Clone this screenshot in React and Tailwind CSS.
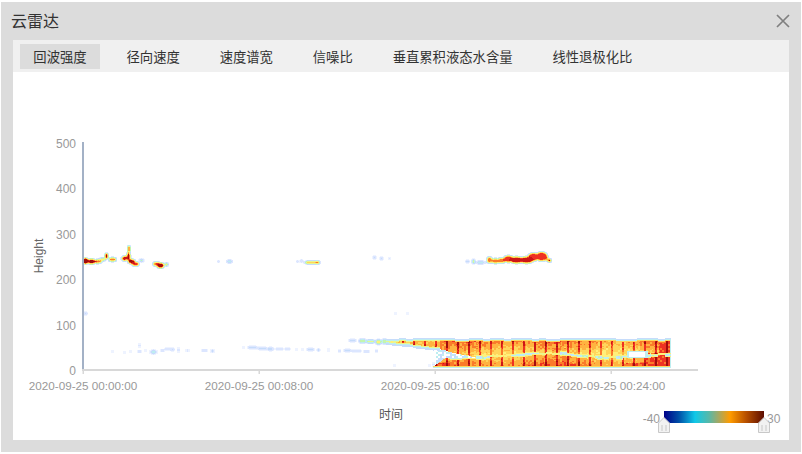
import React from 'react';

const tabs = ['回波强度', '径向速度', '速度谱宽', '信噪比', '垂直累积液态水含量', '线性退极化比'];
const yTicks = [[500, 143], [400, 188.5], [300, 234], [200, 279.5], [100, 325], [0, 370]];
const xTicks = [[83, '2020-09-25 00:00:00'], [259, '2020-09-25 00:08:00'], [435, '2020-09-25 00:16:00'], [611, '2020-09-25 00:24:00']];

// [x, y, rx, ry, peak]
const blobs = [
  [85, 260.5, 3, 3, 1.15], [91, 261, 5, 2.4, 0.95], [97, 261, 4, 2, 0.78], [102, 259, 3, 1.6, 0.5], [106, 255.5, 1.5, 3, 1.05],
  [112, 259, 3.5, 2, 0.78], [128.5, 248.5, 1.5, 3, 1], [124, 258, 3, 2.5, 0.88], [128, 256, 2, 4, 0.95],
  [131, 261, 3.5, 2.4, 0.95], [135, 263.5, 3.5, 2, 0.86], [141, 260, 2.5, 1.6, 0.3], [156, 263.5, 3.5, 2, 0.8],
  [160, 265, 3.5, 2.5, 0.98], [166, 264, 1.8, 1.4, 0.5],
  [467, 261, 2.5, 1.4, 0.2], [473, 261, 1.2, 2.5, 0.4], [480, 262, 6, 1.3, 0.25], [489, 259.5, 2.5, 3, 0.78],
  [495, 260.5, 4, 2.5, 0.76], [501, 260, 4, 2.5, 0.8], [508, 258.5, 5, 3.5, 0.86], [516, 259.5, 7, 3.5, 0.92],
  [526, 259.5, 7, 3.5, 0.92], [533, 256.5, 6, 4, 0.86], [541, 256, 6, 4.5, 0.86], [546, 258, 2, 2.5, 0.6], [549, 260, 1.5, 1.6, 0.95],
  [218, 261, 1.3, 1.3, 0.16], [229, 261, 3.5, 1.4, 0.24], [297, 261, 1.3, 1.3, 0.16], [301, 260.5, 1.3, 1.6, 0.16],
  [311, 262, 7, 1.8, 0.58], [317, 262, 2, 1.3, 0.78], [374, 257, 1.3, 1.8, 0.2], [381, 258, 1.3, 1.8, 0.18], [389, 258, 1, 1, 0.14],
  [395, 313, 0.5, 0.5, 0.3], [407, 313, 0.5, 0.5, 0.3], [656, 183, 0.7, 0.7, 0.25], [85, 313, 2.5, 1.3, 0.18],
  [112, 351, 0.6, 0.6, 0.4], [124, 352, 0.6, 0.6, 0.4], [130, 351, 0.6, 0.6, 0.4], [139, 351, 1, 0.6, 0.4], [139, 345, 0.7, 1, 0.3],
  [145, 350, 0.6, 0.6, 0.4], [153, 351.5, 3.5, 1.6, 0.28], [162, 350, 2, 1, 0.2], [167, 348.5, 2.5, 1.4, 0.18], [172, 349, 2.5, 1.4, 0.18],
  [178, 349.5, 0.7, 1.5, 0.3], [187, 350, 1.5, 0.7, 0.3], [204, 350, 3.5, 1, 0.22], [212, 350.5, 1.5, 0.7, 0.3],
  [243, 347, 0.6, 0.6, 0.4], [252, 347, 5, 1.4, 0.2], [262, 348, 5, 1.4, 0.2], [270, 348.5, 4, 1.6, 0.18], [279, 348.5, 4, 1.4, 0.18],
  [287, 348.5, 3, 1, 0.2], [296, 349, 0.6, 0.6, 0.4], [302, 349, 0.6, 0.6, 0.4], [310, 349, 4, 1.2, 0.2], [318, 349.5, 2.5, 0.8, 0.24],
  [328, 349.5, 0.7, 1, 0.3], [339, 350.5, 0.6, 0.6, 0.4], [347, 350, 4, 1.3, 0.2], [356, 350.5, 5, 1.2, 0.2], [366, 351, 3, 1, 0.22], [376, 350.5, 0.6, 0.6, 0.4],
  [352, 340, 4, 1.4, 0.2], [362, 340.5, 4, 1.8, 0.36], [370, 341, 4, 1.8, 0.42], [378, 341.5, 3, 2.5, 0.48], [384, 341, 3, 2.5, 0.36],
  [394, 365, 0.7, 0.7, 0.3], [429, 365, 0.8, 0.8, 0.3], [433, 364, 0.8, 1, 0.3],
];

function rand(a, b) {
  const s = Math.sin(a * 12.9898 + b * 78.233) * 43758.5453;
  return s - Math.floor(s);
}

function colorOf(v) {
  if (v < 0.07) return '#eef3ff';
  if (v < 0.14) return '#dce6ff';
  if (v < 0.22) return '#c6dcfb';
  if (v < 0.3) return '#bdeef0';
  if (v < 0.38) return '#c4f5b0';
  if (v < 0.46) return '#e8f790';
  if (v < 0.56) return '#fff07a';
  if (v < 0.64) return '#ffd65c';
  if (v < 0.72) return '#ffb340';
  if (v < 0.8) return '#fa7a2c';
  if (v < 0.88) return '#ee3322';
  if (v < 0.95) return '#cc1616';
  return '#a00c10';
}

function bandValue(x, y) {
  if (x < 386 || x > 670) return 0;
  const cx = Math.floor(x / 2);
  const cy = Math.floor(y / 2);
  const seg = Math.floor(x / 7);
  const n = (rand(cx, cy) - 0.5) * 0.1;
  const stripe = ((x - 435 + 1100) % 11) < 2 ? 0.2 : 0;
  const wave = Math.sin(x / 17) * 0.04;
  const top = 339 + (rand(seg, 11) < 0.3 ? 1 : 0);
  const bottom = 367;
  if (y < top - 1 || y > bottom) return 0;
  if (y < top) return 0.18;

  const wedgeBot = 342.5 + (x - 386) * 0.12 + (rand(seg, 2) - 0.5);

  // narrow wedge on the left
  if (x < 440) {
    if (y <= wedgeBot) {
      const d = Math.min(y - top, wedgeBot - y);
      if (d < 1) return 0.26;
      if (d < 2) return 0.44 + stripe * 0.3;
      return 0.66 + stripe + n;
    }
    if (y < wedgeBot + 1.5) return 0.18;
    if (x < 433) return 0;
  }

  const gapY = 355 + Math.sin(x / 23) * 2 + (rand(seg, 3) - 0.5) * 1.5;
  const gapH = rand(seg, 9) > 0.45 ? 0.5 + rand(seg, 5) * 1 : 0;
  const g = Math.abs(y - gapY);

  // start of the lower layer, pale space above it
  if (x < 480) {
    const upperBot = wedgeBot + (x > 440 ? (x - 440) * 0.12 : 0);
    const lowerTop = x < 445 ? 366 - (x - 433) * 0.7 : 358;
    if (y > upperBot && y < lowerTop) {
      if (x < 436) return 0;
      return rand(cx, cy) > 0.65 ? 0 : 0.14 + rand(cx, cy + 1) * 0.14;
    }
  }

  // white hole on the right
  if (x > 626 && x < 648 && y > 350 && y < 358) {
    if (y > 351.5 && y < 356.5 && x > 628 && x < 645) return 0;
    return 0.22;
  }
  if (g < gapH) return 0.2 + rand(cx, cy) * 0.12;
  if (g < gapH + 1) return 0.48 + n;

  const d = Math.min(y - top, bottom - y);
  let v;
  if (y < gapY) {
    v = 0.75 - (y - 341) * 0.012;
    if (x > 560 && x < 640) v -= 0.03;
  } else {
    v = 0.63 + (y - gapY) * 0.012;
    if (y > 362 && (x < 450 || x > 625)) v = 0.8;
  }
  if (x > 645 && y > 352) v = 0.78;
  if (x > 658 && y > 342) v = 0.78;
  v += stripe + n + wave;
  if (d < 1) v = 0.24;
  else if (d < 2) v = Math.min(v, 0.56);
  if (670 - x < 1) v = 0.26;
  return v;
}

function buildCells() {
  const raw = new Map();
  blobs.forEach(([cx, cy, rx, ry, peak]) => {
    for (let x = Math.floor(cx - rx); x <= cx + rx; x++) {
      for (let y = Math.floor(cy - ry); y <= cy + ry; y++) {
        const d = ((x - cx) / rx) ** 2 + ((y - cy) / ry) ** 2;
        if (d > 1) continue;
        const key = x + ',' + y;
        raw.set(key, Math.max(raw.get(key) || 0, peak));
      }
    }
  });

  // 3x3 smoothing, so the echoes fade red > yellow > green > pale at the rim
  const cells = new Map();
  raw.forEach((_, k) => {
    const [x, y] = k.split(',').map(Number);
    for (let i = -1; i <= 1; i++) {
      for (let j = -1; j <= 1; j++) {
        const key = x + i + ',' + (y + j);
        if (cells.has(key)) continue;
        let sum = 0;
        for (let a = -1; a <= 1; a++) {
          for (let b = -1; b <= 1; b++) {
            sum += raw.get(x + i + a + ',' + (y + j + b)) || 0;
          }
        }
        if (sum / 9 > 0.03) cells.set(key, sum / 9);
      }
    }
  });

  for (let x = 386; x <= 670; x++) {
    for (let y = 337; y <= 368; y++) {
      const v = bandValue(x, y);
      if (v > 0) cells.set(x + ',' + y, v);
    }
  }
  return Array.from(cells, ([k, v]) => {
    const [x, y] = k.split(',').map(Number);
    return { x, y, fill: colorOf(v) };
  });
}

const cells = buildCells();

const Handle = ({ x }) => (
  <path
    d={`M${x} 417.5 L${x + 5.5} 423 V432.5 H${x - 5.5} V423 Z M${x - 2} 425 V431 M${x + 2} 425 V431`}
    fill="#f2f2f2"
    stroke="#c8c8c8"
    strokeWidth="1"
  />
);

const App = () => {
  return (
    <div className="w-[802px] h-[454px] bg-white pt-[2px] pl-[1px] overflow-hidden font-['Noto_Sans_CJK_SC','Microsoft_YaHei',sans-serif]">
      <div className="w-[800px] h-[450px] bg-[#dcdcdc] px-3 pb-3 flex flex-col">
        {/* Header */}
        <div className="h-[38px] -mx-1 pl-[3px] pr-[3px] pb-[2px] flex items-center justify-between">
          <span className="text-base leading-none text-[#333] -ml-[1px]">云雷达</span>
          <svg width="14" height="14" viewBox="0 0 14 14" className="mt-[2px]">
            <path d="M1 1 L13 13 M13 1 L1 13" stroke="#808080" strokeWidth="1.7" fill="none" />
          </svg>
        </div>

        <div className="flex-1 bg-white flex flex-col min-h-0">
          {/* Tabs */}
          <div className="h-8 bg-[#f0f0f0] pl-[7px] pt-1 flex items-start gap-[13.2px] text-[13.33px] text-[#333]">
            {tabs.map((t, i) => (
              <div
                key={t}
                className={i === 0 ? 'h-[25px] px-[13.33px] flex items-center bg-[#dcdcdc]' : 'h-[25px] px-[13.33px] flex items-center'}
              >
                {t}
              </div>
            ))}
          </div>

          {/* Chart */}
          <svg width="776" height="368" viewBox="13 72 776 368" className="block">
            <defs>
              <linearGradient id="scale" x1="0" x2="1" y1="0" y2="0">
                <stop offset="0" stopColor="#000088" />
                <stop offset="0.15" stopColor="#0050a8" />
                <stop offset="0.31" stopColor="#10c8e8" />
                <stop offset="0.45" stopColor="#58b8a8" />
                <stop offset="0.55" stopColor="#a8a860" />
                <stop offset="0.66" stopColor="#ff9c00" />
                <stop offset="0.82" stopColor="#b85000" />
                <stop offset="1" stopColor="#5c0c00" />
              </linearGradient>
              <filter id="soft" x="0" y="0" width="100%" height="100%">
                <feGaussianBlur stdDeviation="0.4" />
              </filter>
            </defs>

            <g filter="url(#soft)" shapeRendering="crispEdges">
              {cells.map((c) => (
                <rect key={c.x + '-' + c.y} x={c.x} y={c.y} width="1" height="1" fill={c.fill} />
              ))}
            </g>

            <rect x="82" y="142" width="2" height="228" fill="#a3b1c6" />
            <rect x="82" y="369" width="616" height="2" fill="#d8d8d8" />
            {xTicks.map(([x]) => (
              <rect key={x} x={x - 0.5} y="371" width="1.5" height="3" fill="#d8d8d8" />
            ))}

            <g fontSize="12" fill="#999" fontFamily="'Liberation Sans', sans-serif">
              {yTicks.map(([v, y]) => (
                <text key={v} x="76" y={y + 4.5} textAnchor="end">{v}</text>
              ))}
              {xTicks.map(([x, t]) => (
                <text key={t} x={x} y="390" textAnchor="middle" fontSize="11.7">{t}</text>
              ))}
              <text x="660" y="423" textAnchor="end">-40</text>
              <text x="767" y="423">30</text>
            </g>

            <text x="391" y="419" textAnchor="middle" fontSize="12" fill="#555" fontFamily="'Noto Sans CJK SC', sans-serif">时间</text>
            <text transform="translate(43 256) rotate(-90)" textAnchor="middle" fontSize="12" fill="#666" fontFamily="'Liberation Sans', sans-serif">Height</text>

            <rect x="664" y="411" width="100" height="12" fill="url(#scale)" />
            <Handle x={664} />
            <Handle x={764} />
          </svg>
        </div>
      </div>
    </div>
  );
};

export default App;
